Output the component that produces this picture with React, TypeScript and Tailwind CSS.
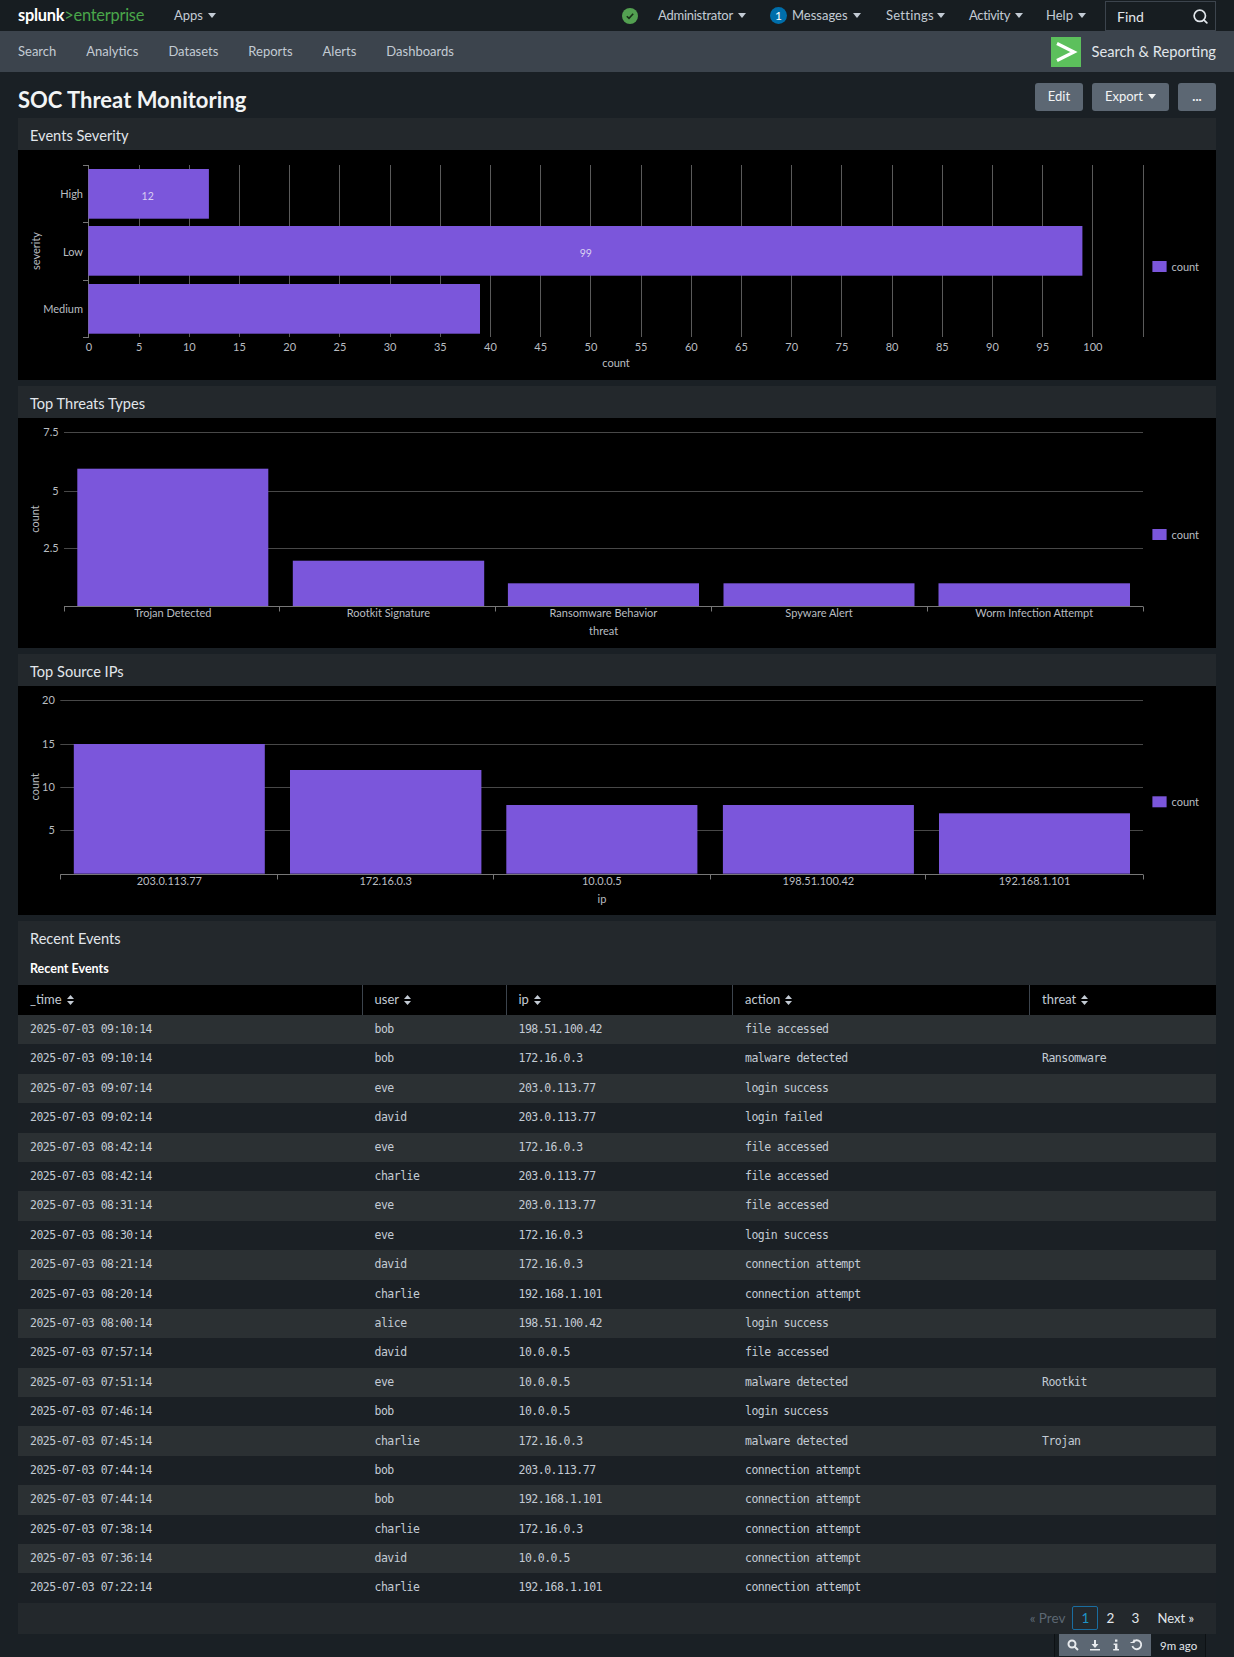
import React from "react";
import { Search } from "lucide-react";

const PURPLE = "#7b56db";
const TXT = "#b9bdc1";
const FS = 11;

function Caret() {
  return (
    <svg width="8" height="5" viewBox="0 0 8 5" className="ml-[5px] shrink-0">
      <path d="M0 0H8L4 5Z" fill="currentColor" />
    </svg>
  );
}

function Sort() {
  return (
    <svg width="7" height="10" viewBox="0 0 7 10" className="ml-[5px] shrink-0">
      <path d="M3.5 0L7 4H0Z M3.5 10L0 6H7Z" fill="#c3cbd4" />
    </svg>
  );
}

function Legend({ y }: { y: number }) {
  return (
    <g>
      <rect x={1134.4} y={y} width={14.2} height={11} fill={PURPLE} />
      <text x={1153.5} y={y + 10} fontSize={FS} fill={TXT}>count</text>
    </g>
  );
}

const snap = (v: number) => Math.round(v) + 0.5;

function Chart1() {
  const xOf = (v: number) => 70.4 + 10.04 * v;
  const ticks = Array.from({ length: 21 }, (_, i) => i * 5);
  return (
    <svg width="1198" height="230" className="block">
      {ticks.map((t) => (
        <line key={t} x1={snap(xOf(t))} x2={snap(xOf(t))} y1={15} y2={187} stroke="#5a5a5a" />
      ))}
      <line x1={1125.5} x2={1125.5} y1={15} y2={187} stroke="#5a5a5a" />
      {[15, 72, 130, 187].map((y) => (
        <line key={y} x1={65} x2={70.4} y1={y + 0.5} y2={y + 0.5} stroke="#777" />
      ))}
      <line x1={70.5} x2={70.5} y1={15} y2={188} stroke="#777" />
      <rect x={70.4} y={19} width={120.5} height={49.7} fill={PURPLE} />
      <rect x={70.4} y={76} width={994} height={49.7} fill={PURPLE} />
      <rect x={70.4} y={134} width={391.6} height={49.7} fill={PURPLE} />
      <text x={65} y={48} textAnchor="end" fontSize={FS} fill={TXT}>High</text>
      <text x={65} y={106} textAnchor="end" fontSize={FS} fill={TXT}>Low</text>
      <text x={65} y={163} textAnchor="end" fontSize={FS} fill={TXT}>Medium</text>
      <text x={129.7} y={50} textAnchor="middle" fontSize={10.5} fill="#d9d0f2">12</text>
      <text x={567.8} y={107} textAnchor="middle" fontSize={10.5} fill="#d9d0f2">99</text>
      {ticks.map((t) => (
        <text key={t} x={xOf(t) + 0.5} y={201} textAnchor="middle" fontSize={FS} fill={TXT}>{t}</text>
      ))}
      <text x={598} y={217} textAnchor="middle" fontSize={FS} fill={TXT}>count</text>
      <text transform="translate(22 101) rotate(-90)" textAnchor="middle" fontSize={FS} fill={TXT}>severity</text>
      <Legend y={111} />
    </svg>
  );
}

type VChartProps = {
  grids: { y: number; label: string }[];
  gridX: number;
  labelRight: number;
  axisY: number;
  bars: { x: number; w: number; top: number; label: string }[];
  ticks: number[];
  axisTitle: string;
  titleX: number;
  titleY: number;
  yTitleY: number;
  legendY: number;
  height: number;
};

function VChart(p: VChartProps) {
  const ay = snap(p.axisY);
  return (
    <svg width="1198" height={p.height} className="block">
      {p.grids.map((g) => (
        <g key={g.label}>
          <line x1={p.gridX} x2={1125} y1={snap(g.y)} y2={snap(g.y)} stroke="#484848" />
          <text x={p.labelRight} y={g.y + 4} textAnchor="end" fontSize={FS} fill={TXT}>{g.label}</text>
        </g>
      ))}
      {p.bars.map((b) => (
        <rect key={b.label} x={b.x} y={b.top} width={b.w} height={p.axisY - b.top} fill={PURPLE} />
      ))}
      <line x1={p.gridX} x2={1125} y1={ay} y2={ay} stroke="#777" />
      {p.ticks.map((t) => (
        <line key={t} x1={snap(t)} x2={snap(t)} y1={ay} y2={ay + 5} stroke="#777" />
      ))}
      {p.bars.map((b) => (
        <text key={b.label} x={b.x + b.w / 2} y={p.axisY + 11} textAnchor="middle" fontSize={FS} fill={TXT}>{b.label}</text>
      ))}
      <text x={p.titleX} y={p.titleY} textAnchor="middle" fontSize={FS} fill={TXT}>{p.axisTitle}</text>
      <text transform={`translate(21 ${p.yTitleY}) rotate(-90)`} textAnchor="middle" fontSize={FS} fill={TXT}>count</text>
      <Legend y={p.legendY} />
    </svg>
  );
}

function Panel({ title, children, chartH }: { title: string; children: React.ReactNode; chartH: string }) {
  return (
    <section className="mb-[6px]">
      <h2 className="h-[32px] bg-[#23282c] pl-[12px] pt-[4px] flex items-center text-[14.6px] font-normal text-[#e1e6eb]">{title}</h2>
      <div className={`bg-black ${chartH}`}>{children}</div>
    </section>
  );
}

const rows: string[][] = [
  ["2025-07-03 09:10:14", "bob", "198.51.100.42", "file accessed", ""],
  ["2025-07-03 09:10:14", "bob", "172.16.0.3", "malware detected", "Ransomware"],
  ["2025-07-03 09:07:14", "eve", "203.0.113.77", "login success", ""],
  ["2025-07-03 09:02:14", "david", "203.0.113.77", "login failed", ""],
  ["2025-07-03 08:42:14", "eve", "172.16.0.3", "file accessed", ""],
  ["2025-07-03 08:42:14", "charlie", "203.0.113.77", "file accessed", ""],
  ["2025-07-03 08:31:14", "eve", "203.0.113.77", "file accessed", ""],
  ["2025-07-03 08:30:14", "eve", "172.16.0.3", "login success", ""],
  ["2025-07-03 08:21:14", "david", "172.16.0.3", "connection attempt", ""],
  ["2025-07-03 08:20:14", "charlie", "192.168.1.101", "connection attempt", ""],
  ["2025-07-03 08:00:14", "alice", "198.51.100.42", "login success", ""],
  ["2025-07-03 07:57:14", "david", "10.0.0.5", "file accessed", ""],
  ["2025-07-03 07:51:14", "eve", "10.0.0.5", "malware detected", "Rootkit"],
  ["2025-07-03 07:46:14", "bob", "10.0.0.5", "login success", ""],
  ["2025-07-03 07:45:14", "charlie", "172.16.0.3", "malware detected", "Trojan"],
  ["2025-07-03 07:44:14", "bob", "203.0.113.77", "connection attempt", ""],
  ["2025-07-03 07:44:14", "bob", "192.168.1.101", "connection attempt", ""],
  ["2025-07-03 07:38:14", "charlie", "172.16.0.3", "connection attempt", ""],
  ["2025-07-03 07:36:14", "david", "10.0.0.5", "connection attempt", ""],
  ["2025-07-03 07:22:14", "charlie", "192.168.1.101", "connection attempt", ""],
];

const cols = ["_time", "user", "ip", "action", "threat"];
const gridCols = "grid grid-cols-[344.5px_144px_226.5px_297px_186px]";

function TopItem({ label, width, className }: { label: string; width?: string; className?: string }) {
  return (
    <span className={`flex items-center text-[#c3cbd4] whitespace-nowrap ${className ?? ""}`}>
      <span className={width}>{label}</span>
      <Caret />
    </span>
  );
}

export default function App() {
  return (
    <div className="w-[1234px] h-[1657px] overflow-hidden bg-[#1a2025] font-[Lato,sans-serif] text-[13px] text-[#c3cbd4]">
      <header className="h-[31px] bg-[#171d21] flex items-center pl-[18px] pr-[18px]">
        <div className="text-[16.4px] leading-none tracking-[-0.25px] w-[125px] whitespace-nowrap">
          <span className="font-bold text-white">splunk</span>
          <span className="text-[#4aa64a]">&gt;enterprise</span>
        </div>
        <div className="ml-[31px]">
          <TopItem label="Apps" />
        </div>
        <div className="ml-auto flex items-center gap-[25px]">
          <svg width="16" height="16" viewBox="0 0 16 16" className="mr-[-5px]">
            <circle cx="8" cy="8" r="8" fill="#53a051" />
            <path d="M4.8 8.2L7 10.4L11.2 5.8" fill="none" stroke="#173017" strokeWidth="1.6" />
          </svg>
          <TopItem label="Administrator" width="w-[75px] tracking-[-0.25px]" />
          <span className="flex items-center ml-[-1px]">
            <span className="w-[17px] h-[17px] rounded-full bg-[#006eaa] text-white text-[12px] flex items-center justify-center mr-[5px]">1</span>
            <TopItem label="Messages" width="w-[56px]" />
          </span>
          <TopItem label="Settings" width="w-[46px] tracking-[0.25px]" />
          <TopItem label="Activity" width="w-[41px] tracking-[-0.35px]" className="ml-[-1px]" />
          <TopItem label="Help" width="w-[27px]" className="ml-[-2px]" />
          <div className="ml-[-6px] w-[111px] h-[30px] mt-[1px] border border-[#3c444d] flex items-center justify-between pl-[11px] pr-[6px] text-[14px] text-[#e1e6eb]">
            <span>Find</span>
            <Search size={17} strokeWidth={2.4} className="text-[#e1e6eb]" />
          </div>
        </div>
      </header>

      <nav className="h-[41px] bg-[#3c444d] flex items-center pl-[18px] pr-[18px] gap-[30px]">
        {["Search", "Analytics", "Datasets", "Reports", "Alerts", "Dashboards"].map((n) => (
          <span key={n} className="text-[#c3cbd4]">{n}</span>
        ))}
        <div className="ml-auto flex items-center">
          <svg width="30" height="30" viewBox="0 0 30 30" className="mr-[11px]">
            <rect width="30" height="30" fill="#5cc05c" />
            <path d="M6 6.5L23 15L6 23.5" fill="none" stroke="#fff" strokeWidth="3.2" />
          </svg>
          <span className="text-[14.7px] text-[#e1e6eb]">Search &amp; Reporting</span>
        </div>
      </nav>

      <main className="px-[18px]">
        <div className="h-[46px] flex items-center justify-between">
          <h1 className="text-[22px] font-bold leading-none text-[#f2f4f5] mt-[9px]">SOC Threat Monitoring</h1>
          <div className="flex gap-[9px] text-[13px] text-[#f2f4f5] mt-[3px]">
            <span className="w-[48px] h-[28px] bg-[#5c6773] rounded-[3px] flex items-center justify-center">Edit</span>
            <span className="w-[77px] h-[28px] bg-[#5c6773] rounded-[3px] flex items-center justify-center">
              Export
              <Caret />
            </span>
            <span className="w-[38px] h-[28px] bg-[#5c6773] rounded-[3px] flex items-center justify-center font-bold">...</span>
          </div>
        </div>

        <Panel title="Events Severity" chartH="h-[230px]">
          <Chart1 />
        </Panel>

        <Panel title="Top Threats Types" chartH="h-[230px]">
          <VChart
            height={230}
            gridX={46}
            labelRight={40.7}
            axisY={188}
            grids={[
              { y: 14.3, label: "7.5" },
              { y: 73.3, label: "5" },
              { y: 130.3, label: "2.5" },
            ]}
            bars={[
              { x: 59.3, w: 191, top: 50.7, label: "Trojan Detected" },
              { x: 274.8, w: 191.4, top: 142.7, label: "Rootkit Signature" },
              { x: 489.9, w: 191.1, top: 165.3, label: "Ransomware Behavior" },
              { x: 705.5, w: 191, top: 165.3, label: "Spyware Alert" },
              { x: 920.5, w: 191.5, top: 165.3, label: "Worm Infection Attempt" },
            ]}
            ticks={[46, 261.4, 477.3, 693, 909, 1125]}
            axisTitle="threat"
            titleX={585.6}
            titleY={216.5}
            yTitleY={101}
            legendY={111}
          />
        </Panel>

        <Panel title="Top Source IPs" chartH="h-[229px]">
          <VChart
            height={229}
            gridX={42.3}
            labelRight={36.8}
            axisY={187.7}
            grids={[
              { y: 13.7, label: "20" },
              { y: 58, label: "15" },
              { y: 101.3, label: "10" },
              { y: 144.3, label: "5" },
            ]}
            bars={[
              { x: 55.8, w: 191, top: 58, label: "203.0.113.77" },
              { x: 272, w: 191.4, top: 84, label: "172.16.0.3" },
              { x: 488.3, w: 191.1, top: 119, label: "10.0.0.5" },
              { x: 704.9, w: 191, top: 119, label: "198.51.100.42" },
              { x: 921, w: 191, top: 127.3, label: "192.168.1.101" },
            ]}
            ticks={[42.3, 259, 474.9, 691.6, 907.3, 1125]}
            axisTitle="ip"
            titleX={584}
            titleY={216.5}
            yTitleY={100.7}
            legendY={110.3}
          />
        </Panel>

        <section className="bg-[#23282c]">
          <h2 className="h-[36px] pl-[12px] flex items-center text-[14.6px] font-normal text-[#e1e6eb]">Recent Events</h2>
          <h3 className="h-[28px] pl-[12px] flex items-center text-[12.5px] font-bold text-white pb-[3px]">Recent Events</h3>
          <div className={`${gridCols} bg-black h-[30px]`}>
            {cols.map((c, i) => (
              <div key={c} className={`flex items-center pl-[12px] text-[13px] text-[#c3cbd4] ${i < 4 ? "border-r border-[#3c444d]" : ""}`}>
                {c}
                <Sort />
              </div>
            ))}
          </div>
          {rows.map((r, i) => (
            <div
              key={i}
              className={`${gridCols} h-[29.4px] items-center font-['DejaVu_Sans_Mono',monospace] text-[11.5px] tracking-[-0.5px] text-[#c3cbd4] ${i % 2 === 0 ? "bg-[#2b3033]" : "bg-[#1b2025]"}`}
            >
              {r.map((v, j) => (
                <div key={j} className="pl-[12px] whitespace-nowrap">{v}</div>
              ))}
            </div>
          ))}
          <div className="h-[31px] flex items-center justify-end pr-[22px] text-[13.5px] text-[#e1e6eb]">
            <span className="text-[#5c6773] mr-[7px]">« Prev</span>
            <span className="w-[26px] h-[24px] border border-[#1a6da0] rounded-[2px] text-[#1e93c6] flex items-center justify-center mr-[2px]">1</span>
            <span className="w-[20px] text-center mr-[5px]">2</span>
            <span className="w-[20px] text-center mr-[12px]">3</span>
            <span className="text-[13px]">Next »</span>
          </div>
        </section>

        <div className="flex justify-end pr-[10px]">
          <div className="w-[152px] h-[23px] bg-[#171d21] border-x border-[#0d1114] flex items-center pl-[4px]">
            <div className="w-[92px] h-[22px] bg-[#5c6773] flex items-center justify-around px-[3px] text-[#e8ebee]">
              <svg width="12" height="12" viewBox="0 0 12 12" fill="none" stroke="currentColor" strokeWidth="2">
                <circle cx="5" cy="5" r="3.5" />
                <path d="M7.5 7.5L11 11" />
              </svg>
              <svg width="12" height="12" viewBox="0 0 12 12" fill="currentColor">
                <path d="M5 1H7V5H9.5L6 9L2.5 5H5Z M1 10H11V11.5H1Z" />
              </svg>
              <svg width="8" height="12" viewBox="0 0 8 12" fill="currentColor">
                <path d="M3 0.5H5.4V2.8H3Z M1.6 4.4H5.4V10H7V11.5H1.2V10H3V5.9H1.6Z" />
              </svg>
              <svg width="13" height="12" viewBox="0 0 13 12" fill="none" stroke="currentColor" strokeWidth="1.8">
                <path d="M3 3.2A4.5 4.5 0 1 1 2.4 7" />
                <path d="M0.5 3.5H4V0.5" strokeWidth="1.2" />
              </svg>
            </div>
            <span className="ml-[9px] text-[11.5px] text-[#e1e6eb]">9m ago</span>
          </div>
        </div>
      </main>
    </div>
  );
}
